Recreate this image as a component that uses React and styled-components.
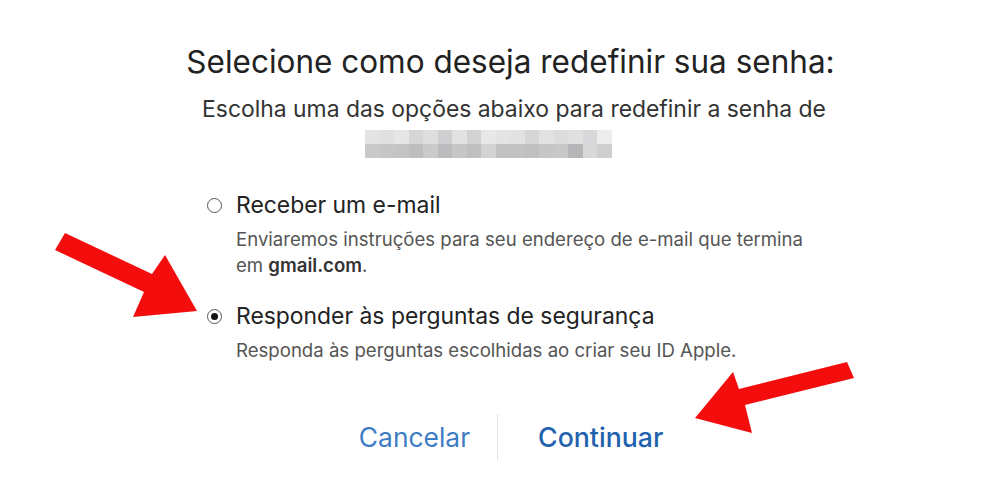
import React from 'react'
import styled, { createGlobalStyle } from 'styled-components'

var Global = createGlobalStyle`
html, body {
  margin: 0;
  padding: 0;
  background: #ffffff;
}
body {
  font-family: Inter, "Liberation Sans", Arial, sans-serif;
  -webkit-font-smoothing: antialiased;
}
`

// pixelated e-mail, two rows of grey blocks
var blurTop = ['#e4e4e4', '#e0e0e0', '#e6e6e6', '#d6d6d6', '#dedede', '#cfcfd1', '#e2e2e2', '#d2d2d2', '#e8e8e8', '#e4e4e4', '#e2e2e2', '#d6d6d6', '#e2e2e2', '#dcdcdc', '#e0e0e0', '#d8d8da', '#ececec']
var blurBottom = ['#c9c9c9', '#c6c6c6', '#c4c4c4', '#bebebe', '#cacaca', '#bcbcbe', '#c6c6c6', '#c0c0c0', '#d2d2d2', '#c2c2c2', '#c2c2c2', '#c0c0c0', '#c6c6c6', '#c8c8c8', '#b6b6b8', '#d8d8d8', '#cecece']

function App() {
  return (
    <Screen>
      <Global />
      <Panel>
        <Title>Selecione como deseja redefinir sua senha:</Title>
        <Subtitle>Escolha uma das opções abaixo para redefinir a senha de</Subtitle>
        <Blur>
          <BlurRow>{blurTop.map((c, i) => <Cell key={i} style={{ background: c }} />)}</BlurRow>
          <BlurRow>{blurBottom.map((c, i) => <Cell key={i} style={{ background: c }} />)}</BlurRow>
        </Blur>

        <Options>
          <Option>
            <OptionHead>
              <Radio />
              <Label>Receber um e-mail</Label>
            </OptionHead>
            <Hint>
              Enviaremos instruções para seu endereço de e-mail que termina<br />
              em <b>gmail.com</b>.
            </Hint>
          </Option>
          <Option>
            <OptionHead>
              <Radio checked />
              <Label>Responder às perguntas de segurança</Label>
            </OptionHead>
            <Hint>Responda às perguntas escolhidas ao criar seu ID Apple.</Hint>
          </Option>
        </Options>

        <Buttons>
          <Link>Cancelar</Link>
          <Divider />
          <Link primary>Continuar</Link>
        </Buttons>
      </Panel>

      <Arrow style={{ left: 0, top: 0 }} width="984" height="496" viewBox="0 0 984 496">
        <polygon fill="#f40d0d" points="55,250 65,233 152,274 165,255 197,311 133,317 144,292" />
        <polygon fill="#f40d0d" points="847,362 854,378 745,405 752,433 695,418 733,372 739,389" />
      </Arrow>
    </Screen>
  )
}

var Screen = styled.div`
position: relative;
width: 984px;
height: 496px;
overflow: hidden;
background: #ffffff;
`

var Panel = styled.div`
display: flex;
flex-direction: column;
align-items: center;
padding-top: 43px;
`

var Title = styled.h1`
margin: 0 0 0 37px;
font-size: 31.5px;
line-height: 38px;
font-weight: 400;
color: #222222;
`

var Subtitle = styled.p`
margin: 14px 0 0 44px;
font-size: 22.9px;
line-height: 28px;
color: #333333;
`

var Blur = styled.div`
display: flex;
flex-direction: column;
margin-top: 7px;
margin-left: -7px;
`

var BlurRow = styled.div`
display: flex;
`

var Cell = styled.div`
width: 14.5px;
height: 14px;
`

var Options = styled.div`
align-self: flex-start;
margin-left: 207px;
margin-top: 32px;
display: flex;
flex-direction: column;
gap: 23px;
`

var Option = styled.div`
display: flex;
flex-direction: column;
`

var OptionHead = styled.div`
display: flex;
align-items: center;
gap: 14px;
`

var Radio = styled.span`
box-sizing: border-box;
width: 15px;
height: 15px;
border-radius: 50%;
border: 1.5px solid #555555;
display: flex;
align-items: center;
justify-content: center;
&::after {
  content: "";
  width: 7px;
  height: 7px;
  border-radius: 50%;
  background: #111111;
  display: ${p => (p.checked ? 'block' : 'none')};
}
`

var Label = styled.span`
font-size: 22.9px;
color: #222222;
line-height: 30px;
`

var Hint = styled.div`
margin-left: 29px;
margin-top: 6px;
font-size: 18.6px;
line-height: 26px;
color: #555555;
b {
  font-weight: 600;
  color: #333333;
}
`

var Buttons = styled.div`
display: flex;
align-items: center;
margin-top: 51px;
margin-left: 38px;
`

var Link = styled.span`
font-size: ${p => (p.primary ? '26.7px' : '26.4px')};
color: ${p => (p.primary ? '#1f62ad' : '#3e7cc4')};
font-weight: ${p => (p.primary ? 500 : 400)};
padding: 0 ${p => (p.primary ? '0 0 40px' : '27px 0 0')};
`

var Divider = styled.div`
width: 1px;
height: 46px;
background: #e2e2e2;
`

var Arrow = styled.svg`
position: absolute;
pointer-events: none;
`

export default App
